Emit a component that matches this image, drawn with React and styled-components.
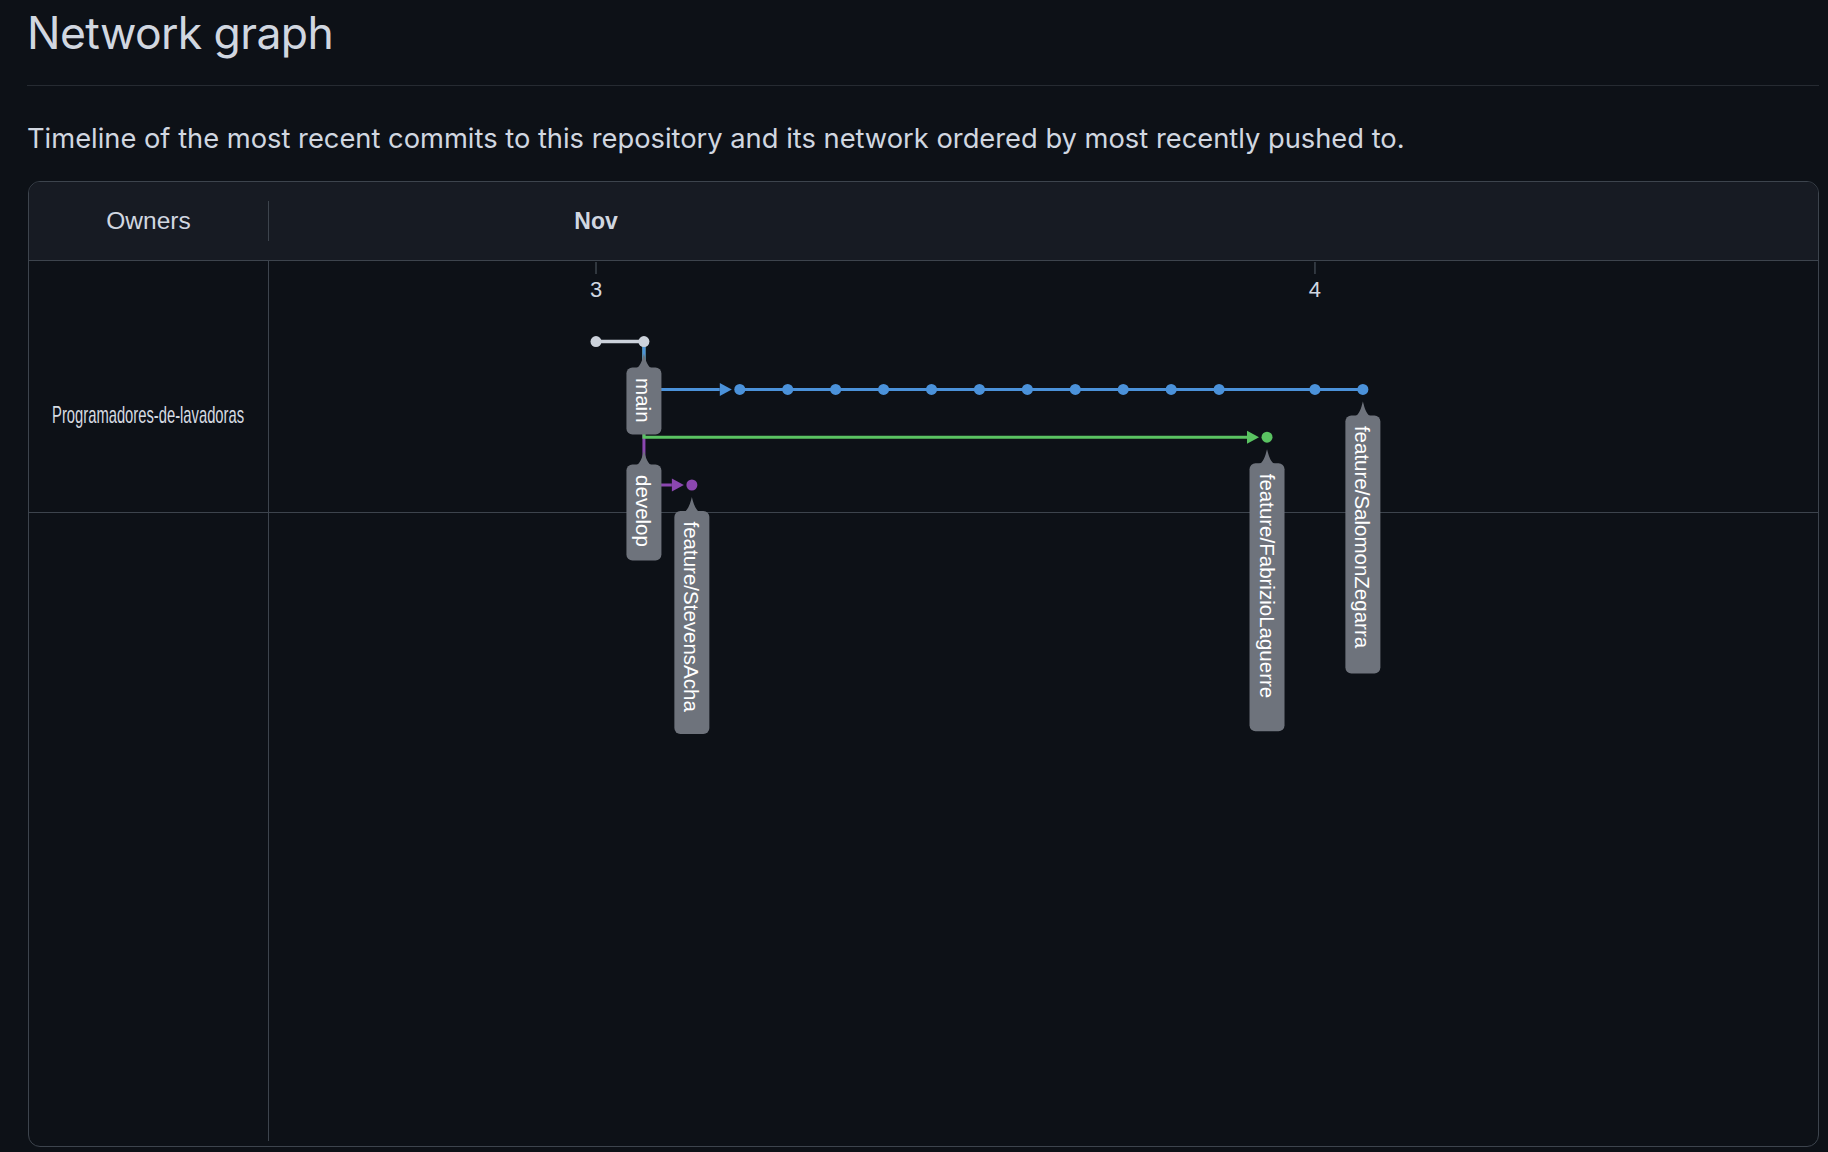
import React from 'react';
import styled, { createGlobalStyle } from 'styled-components';

const BORDER = '#3d444d';
const TEXT = '#d1d7e0';
const LABEL_BG = '#6e737c';

const COL = 47.93;
const ROW = 47.8;
const X0 = 327;
const Y0 = 80.6;

const colX = k => X0 + COL * k;
const rowY = r => Y0 + ROW * r;

const BRANCH = {
  root: '#ccd2db',
  main: '#4b92da',
  green: '#5ac362',
  purple: '#8b47b0'
};

const GlobalStyle = createGlobalStyle`
  html, body {
    margin: 0;
    padding: 0;
    background: #0d1117;
  }
  body {
    font-family: Inter, "Noto Sans", sans-serif;
    color: ${TEXT};
  }
`;

const Page = styled.div`
  padding: 5px 9px 0 27px;
`;

const Title = styled.h1`
  margin: 0;
  font-size: 44.5px;
  line-height: 56px;
  font-weight: 400;
  letter-spacing: -0.6px;
  color: ${TEXT};
`;

const Rule = styled.hr`
  margin: 24px 0 0 0;
  border: 0;
  border-top: 1px solid #262b32;
`;

const Lead = styled.p`
  margin: 35px 0 0 0;
  font-size: 27.3px;
  line-height: 36px;
  color: ${TEXT};
`;

const GraphBox = styled.div`
  margin: 24px 0 0 1px;
  border: 1px solid ${BORDER};
  border-radius: 12px;
  overflow: hidden;
  background: #0d1117;
`;

const Header = styled.div`
  display: flex;
  align-items: center;
  height: 78px;
  background: #171b23;
  border-bottom: 1px solid ${BORDER};
`;

const HeaderOwners = styled.div`
  width: 239px;
  height: 40px;
  border-right: 1px solid ${BORDER};
  display: flex;
  align-items: center;
  justify-content: center;
  font-family: "Liberation Sans", Arial, sans-serif;
  font-size: 24.5px;
  color: ${TEXT};
`;

const HeaderTimeline = styled.div`
  flex: 1;
  align-self: stretch;
  position: relative;
`;

const MonthLabel = styled.span`
  position: absolute;
  top: 50%;
  left: ${p => p.$x}px;
  transform: translate(-50%, -50%);
  font-family: "Liberation Sans", Arial, sans-serif;
  font-weight: 700;
  font-size: 23px;
  color: ${TEXT};
`;

const Body = styled.div`
  display: flex;
  padding-bottom: 5px;
`;

const OwnerColumn = styled.div`
  width: 239px;
  height: 880px;
  border-right: 1px solid ${BORDER};
`;

const OwnerRow = styled.div`
  box-sizing: border-box;
  height: 252px;
  padding-top: 142px;
  border-bottom: 1px solid ${BORDER};
  display: flex;
  justify-content: center;
  align-items: flex-start;
`;

const OwnerName = styled.span`
  display: inline-block;
  flex-shrink: 0;
  font-family: "Liberation Sans", Arial, sans-serif;
  font-size: 24px;
  line-height: 24px;
  white-space: nowrap;
  color: #d6dbe2;
  transform: scaleX(0.615);
`;

const GraphColumn = styled.div`
  flex: 1;
  height: 880px;
  position: relative;
`;

const GraphRow = styled.div`
  height: 251px;
  border-bottom: 1px solid ${BORDER};
`;

const GraphCanvas = styled.svg`
  position: absolute;
  left: 0;
  top: 0;
  width: 100%;
  height: 100%;
  overflow: visible;
`;

const TickText = styled.text`
  font-family: "Liberation Sans", Arial, sans-serif;
  font-size: 22px;
  fill: ${TEXT};
`;

const LabelText = styled.text`
  font-family: "Liberation Sans", Arial, sans-serif;
  font-size: 20.5px;
  fill: #ffffff;
`;

const ticks = [
  { col: 0, text: '3' },
  { col: 15, text: '4' }
];

const commits = [
  { col: 0, row: 0, color: BRANCH.root },
  { col: 1, row: 0, color: BRANCH.root },
  ...[3, 4, 5, 6, 7, 8, 9, 10, 11, 12, 13, 15, 16].map(col => ({ col, row: 1, color: BRANCH.main })),
  { col: 14, row: 2, color: BRANCH.green },
  { col: 2, row: 3, color: BRANCH.purple }
];

// branches forking off commit (1, 0): drawn bottom first so main ends up on top
const forks = [
  { row: 3, to: 2, color: BRANCH.purple },
  { row: 2, to: 14, color: BRANCH.green },
  { row: 1, to: 3, color: BRANCH.main }
];

const labels = [
  { text: 'main', cx: colX(1), top: rowY(0) + 26, length: 67 },
  { text: 'develop', cx: colX(1), top: rowY(0) + 123, length: 96 },
  { text: 'feature/StevensAcha', cx: colX(2), top: rowY(3) + 26, length: 223 },
  { text: 'feature/FabrizioLaguerre', cx: colX(14), top: rowY(2) + 26, length: 268 },
  { text: 'feature/SalomonZegarra', cx: colX(16), top: rowY(1) + 26, length: 258 }
];

function Arrow({ x, y, color }) {
  // x is the commit the arrow points at
  return (
    <polygon
      points={`${x - 20},${y - 6.5} ${x - 8},${y} ${x - 20},${y + 6.5}`}
      fill={color}
    />
  );
}

function BranchLabel({ text, cx, top, length }) {
  const tip = top - 14;
  const base = top + 1;
  const pointer = `M${cx} ${tip} C${cx + 1.5} ${tip + 6} ${cx + 4} ${base} ${cx + 9} ${base} L${cx - 9} ${base} C${cx - 4} ${base} ${cx - 1.5} ${tip + 6} ${cx} ${tip} Z`;
  return (
    <g>
      <path d={pointer} fill={LABEL_BG} />
      <rect x={cx - 17.5} y={top} width={35} height={length} rx={6} fill={LABEL_BG} />
      <LabelText
        transform={`translate(${cx} ${top + 10.5}) rotate(90)`}
        dominantBaseline="central"
      >
        {text}
      </LabelText>
    </g>
  );
}

function NetworkGraph() {
  const fx = colX(1);
  const fy = rowY(0);
  return (
    <GraphCanvas>
      {ticks.map(t => (
        <g key={t.text}>
          <line x1={colX(t.col)} y1={1} x2={colX(t.col)} y2={13} stroke={BORDER} strokeWidth={1.5} />
          <TickText x={colX(t.col)} y={36} textAnchor="middle">{t.text}</TickText>
        </g>
      ))}

      {forks.map(f => (
        <g key={f.row}>
          <polyline
            points={`${fx},${fy} ${fx},${rowY(f.row)} ${colX(f.to) - 20},${rowY(f.row)}`}
            fill="none"
            stroke={f.color}
            strokeWidth={3}
          />
          <Arrow x={colX(f.to)} y={rowY(f.row)} color={f.color} />
        </g>
      ))}

      <line x1={colX(3)} y1={rowY(1)} x2={colX(16)} y2={rowY(1)} stroke={BRANCH.main} strokeWidth={3} />
      <line x1={colX(0)} y1={rowY(0)} x2={colX(1)} y2={rowY(0)} stroke={BRANCH.root} strokeWidth={3.5} />

      {commits.map(c => (
        <circle key={`${c.col}-${c.row}`} cx={colX(c.col)} cy={rowY(c.row)} r={5.5} fill={c.color} />
      ))}

      {labels.map(l => (
        <BranchLabel key={l.text} {...l} />
      ))}
    </GraphCanvas>
  );
}

export default function App() {
  return (
    <Page>
      <GlobalStyle />
      <Title>Network graph</Title>
      <Rule />
      <Lead>
        Timeline of the most recent commits to this repository and its network ordered by most recently pushed to.
      </Lead>
      <GraphBox>
        <Header>
          <HeaderOwners>Owners</HeaderOwners>
          <HeaderTimeline>
            <MonthLabel $x={X0}>Nov</MonthLabel>
          </HeaderTimeline>
        </Header>
        <Body>
          <OwnerColumn>
            <OwnerRow>
              <OwnerName>Programadores-de-lavadoras</OwnerName>
            </OwnerRow>
          </OwnerColumn>
          <GraphColumn>
            <GraphRow />
            <NetworkGraph />
          </GraphColumn>
        </Body>
      </GraphBox>
    </Page>
  );
}
